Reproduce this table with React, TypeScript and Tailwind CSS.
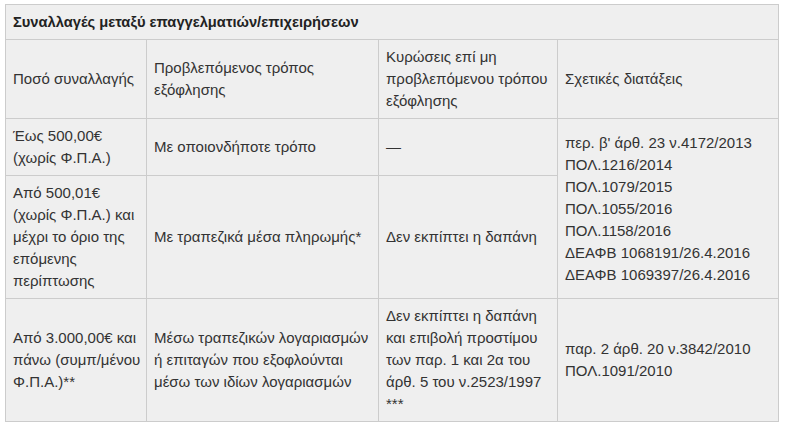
const cell = 'border border-[#cccccc] px-[7px] py-[6px] align-middle whitespace-nowrap';

export default function App() {
  return (
    <div className="min-h-screen bg-white pl-[5px] pt-[4px]">
      <table
        className="w-[773px] table-fixed border-collapse bg-[#efefef] text-[15px] leading-[22px] text-[#333333]"
        style={{ fontFamily: '"Liberation Sans", Arial, sans-serif' }}
      >
        <colgroup>
          <col className="w-[141px]" />
          <col className="w-[232px]" />
          <col className="w-[179px]" />
          <col className="w-[221px]" />
        </colgroup>
        <tbody>
          <tr>
            <td colSpan={4} className={`${cell} text-[14.7px] font-bold text-[#222222]`}>
              Συναλλαγές μεταξύ επαγγελματιών/επιχειρήσεων
            </td>
          </tr>
          <tr>
            <td className={cell}>Ποσό συναλλαγής</td>
            <td className={cell}>
              Προβλεπόμενος τρόπος
              <br />
              εξόφλησης
            </td>
            <td className={cell}>
              Κυρώσεις επί μη
              <br />
              προβλεπόμενου τρόπου
              <br />
              εξόφλησης
            </td>
            <td className={cell}>Σχετικές διατάξεις</td>
          </tr>
          <tr>
            <td className={cell}>
              Έως 500,00€
              <br />
              (χωρίς Φ.Π.Α.)
            </td>
            <td className={cell}>Με οποιονδήποτε τρόπο</td>
            <td className={cell}>—</td>
            <td rowSpan={2} className={cell}>
              περ. β' άρθ. 23 ν.4172/2013
              <br />
              ΠΟΛ.1216/2014
              <br />
              ΠΟΛ.1079/2015
              <br />
              ΠΟΛ.1055/2016
              <br />
              ΠΟΛ.1158/2016
              <br />
              ΔΕΑΦΒ 1068191/26.4.2016
              <br />
              ΔΕΑΦΒ 1069397/26.4.2016
            </td>
          </tr>
          <tr>
            <td className={cell}>
              Από 500,01€
              <br />
              (χωρίς Φ.Π.Α.) και
              <br />
              μέχρι το όριο της
              <br />
              επόμενης
              <br />
              περίπτωσης
            </td>
            <td className={cell}>Με τραπεζικά μέσα πληρωμής*</td>
            <td className={cell}>Δεν εκπίπτει η δαπάνη</td>
          </tr>
          <tr>
            <td className={cell}>
              Από 3.000,00€ και
              <br />
              πάνω (συμπ/μένου
              <br />
              Φ.Π.Α.)**
            </td>
            <td className={cell}>
              Μέσω τραπεζικών λογαριασμών
              <br />
              ή επιταγών που εξοφλούνται
              <br />
              μέσω των ιδίων λογαριασμών
            </td>
            <td className={cell}>
              Δεν εκπίπτει η δαπάνη
              <br />
              και επιβολή προστίμου
              <br />
              των παρ. 1 και 2α του
              <br />
              άρθ. 5 του ν.2523/1997
              <br />
              ***
            </td>
            <td className={cell}>
              παρ. 2 άρθ. 20 ν.3842/2010
              <br />
              ΠΟΛ.1091/2010
            </td>
          </tr>
        </tbody>
      </table>
    </div>
  );
}
